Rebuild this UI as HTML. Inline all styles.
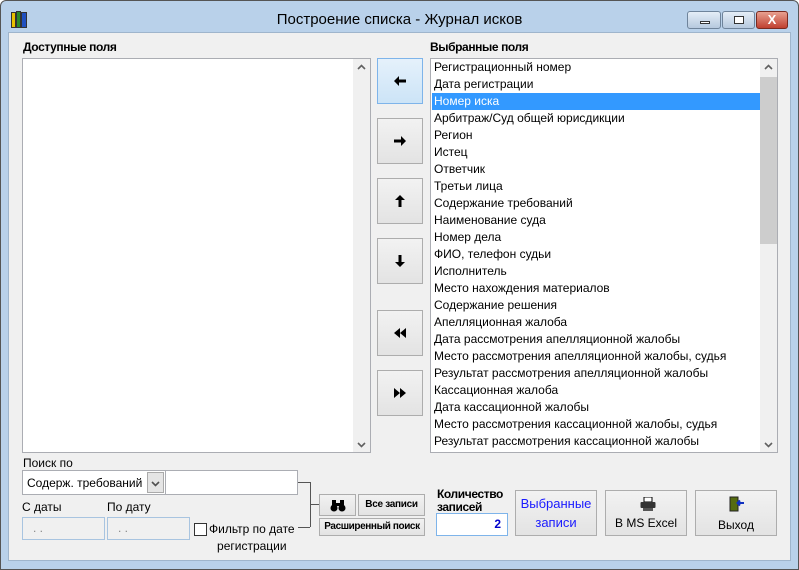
<!DOCTYPE html>
<html><head><meta charset="utf-8"><style>
*{margin:0;padding:0;box-sizing:border-box}
body{width:799px;height:570px;overflow:hidden;background:#fff;font-family:"Liberation Sans",sans-serif;font-size:12px;position:relative}
.abs{position:absolute}
#win{left:0;top:0;width:799px;height:570px;background:#b9d1ea;border:1px solid #555;border-radius:6px 6px 0 0}
#client{left:8px;top:32px;width:783px;height:529px;background:#f0f0f0;border:1px solid #9fb5cc}
.title{left:0;width:799px;top:11px;text-align:center;font-size:15px;color:#000}
.lbl{font-weight:bold;font-size:12px;font-family:"Liberation Sans",sans-serif;letter-spacing:-0.4px}
.list{background:#fff;border:1px solid #abadb3}
.btn{background:linear-gradient(#f2f2f2,#e3e3e3);border:1px solid #adadad;text-align:center}
.item{position:absolute;left:3px;height:17px;line-height:17px;font-size:12px;white-space:nowrap}
.sb{background:#f0f0f0}
.btn svg{position:absolute;left:16px;top:16px}
</style></head><body>
<div id="win" class="abs"></div>
<div class="abs" style="left:11px;top:12px;width:5px;height:16px;background:#e8c000;border:1px solid #333"></div>
<div class="abs" style="left:16px;top:11px;width:5px;height:17px;background:#2a8a2a;border:1px solid #333"></div>
<div class="abs" style="left:21px;top:12px;width:6px;height:16px;background:#2050c0;border:1px solid #333"></div>
<div class="abs title">Построение списка - Журнал исков</div>
<div class="abs" style="left:687px;top:11px;width:34px;height:18px;border:1px solid #6f849b;border-radius:3px;background:linear-gradient(#e4edf7,#b6c9de)"><div class="abs" style="left:12px;top:9px;width:10px;height:3px;background:#fff;border:1px solid #333"></div></div>
<div class="abs" style="left:722px;top:11px;width:33px;height:18px;border:1px solid #6f849b;border-radius:3px;background:linear-gradient(#e4edf7,#b6c9de)"><div class="abs" style="left:11px;top:4px;width:10px;height:8px;background:#fff;border:1px solid #333"></div></div>
<div class="abs" style="left:756px;top:11px;width:32px;height:18px;border:1px solid #7a2a20;border-radius:3px;background:linear-gradient(#e8a090,#c04030);color:#fff;font-weight:bold;text-align:center;line-height:16px;font-size:13px">X</div>
<div id="client" class="abs"></div>

<div class="abs lbl" style="left:23px;top:40px">Доступные поля</div>
<div class="abs lbl" style="left:430px;top:40px">Выбранные поля</div>

<div class="abs list" style="left:22px;top:58px;width:349px;height:395px">
<div class="abs sb" style="right:0;top:0;width:17px;height:393px">
<svg class="abs" style="left:4px;top:5px" width="9" height="6"><path d="M1 5L4.5 1.5L8 5" stroke="#606060" stroke-width="1.6" fill="none"/></svg>
<svg class="abs" style="left:4px;top:383px" width="9" height="6"><path d="M1 1L4.5 4.5L8 1" stroke="#606060" stroke-width="1.6" fill="none"/></svg></div>
</div>

<div class="abs list" style="left:430px;top:58px;width:348px;height:395px">
<div class="abs sb" style="right:0;top:0;width:17px;height:393px">
<svg class="abs" style="left:4px;top:5px" width="9" height="6"><path d="M1 5L4.5 1.5L8 5" stroke="#606060" stroke-width="1.6" fill="none"/></svg>
<div class="abs" style="left:0;top:18px;width:17px;height:167px;background:#cdcdcd"></div>
<svg class="abs" style="left:4px;top:383px" width="9" height="6"><path d="M1 1L4.5 4.5L8 1" stroke="#606060" stroke-width="1.6" fill="none"/></svg></div>
<div class="abs" style="left:1px;top:34px;width:328px;height:17px;background:#3399ff"></div>
<div class="item" style="top:0">Регистрационный номер</div>
<div class="item" style="top:17px">Дата регистрации</div>
<div class="item" style="top:34px;color:#fff">Номер иска</div>
<div class="item" style="top:51px">Арбитраж/Суд общей юрисдикции</div>
<div class="item" style="top:68px">Регион</div>
<div class="item" style="top:85px">Истец</div>
<div class="item" style="top:102px">Ответчик</div>
<div class="item" style="top:119px">Третьи лица</div>
<div class="item" style="top:136px">Содержание требований</div>
<div class="item" style="top:153px">Наименование суда</div>
<div class="item" style="top:170px">Номер дела</div>
<div class="item" style="top:187px">ФИО, телефон судьи</div>
<div class="item" style="top:204px">Исполнитель</div>
<div class="item" style="top:221px">Место нахождения материалов</div>
<div class="item" style="top:238px">Содержание решения</div>
<div class="item" style="top:255px">Апелляционная жалоба</div>
<div class="item" style="top:272px">Дата рассмотрения апелляционной жалобы</div>
<div class="item" style="top:289px">Место рассмотрения апелляционной жалобы, судья</div>
<div class="item" style="top:306px">Результат рассмотрения апелляционной жалобы</div>
<div class="item" style="top:323px">Кассационная жалоба</div>
<div class="item" style="top:340px">Дата кассационной жалобы</div>
<div class="item" style="top:357px">Место рассмотрения кассационной жалобы, судья</div>
<div class="item" style="top:374px">Результат рассмотрения кассационной жалобы</div>
</div>

<div class="abs btn" style="left:377px;top:58px;width:46px;height:46px;background:linear-gradient(#e5f1fb,#cce4f7);border-color:#7eb4ea"><svg width="12" height="12"><path d="M0 6L5 1V4.5H12V7.5H5V11Z" fill="#000"/></svg></div>
<div class="abs btn" style="left:377px;top:118px;width:46px;height:46px"><svg width="12" height="12"><path d="M12 6L7 1V4.5H0V7.5H7V11Z" fill="#000"/></svg></div>
<div class="abs btn" style="left:377px;top:178px;width:46px;height:46px"><svg width="12" height="12"><path d="M6 0L11 5H7.5V12H4.5V5H1Z" fill="#000"/></svg></div>
<div class="abs btn" style="left:377px;top:238px;width:46px;height:46px"><svg width="12" height="12"><path d="M6 12L11 7H7.5V0H4.5V7H1Z" fill="#000"/></svg></div>
<div class="abs btn" style="left:377px;top:310px;width:46px;height:46px"><svg width="12" height="12"><path d="M0 6L6 1V11ZM6 6L12 1V11Z" fill="#000"/></svg></div>
<div class="abs btn" style="left:377px;top:370px;width:46px;height:46px"><svg width="12" height="12"><path d="M6 6L0 1V11ZM12 6L6 1V11Z" fill="#000"/></svg></div>

<div class="abs" style="left:23px;top:456px">Поиск по</div>
<div class="abs" style="left:22px;top:470px;width:276px;height:25px;background:#fff;border:1px solid #abadb3"></div>
<div class="abs" style="left:27px;top:476px">Содерж. требований</div>
<div class="abs" style="left:147px;top:472px;width:17px;height:21px;background:#e5e5e5;border:1px solid #aaa"><svg class="abs" style="left:3px;top:8px" width="9" height="6"><path d="M1 1L4.5 4.5L8 1" stroke="#505050" stroke-width="1.6" fill="none"/></svg></div>
<div class="abs" style="left:165px;top:471px;width:1px;height:23px;background:#abadb3"></div>
<div class="abs" style="left:298px;top:482px;width:12px;height:1px;background:#555"></div>
<div class="abs" style="left:310px;top:482px;width:1px;height:45px;background:#555"></div>
<div class="abs" style="left:310px;top:504px;width:9px;height:1px;background:#555"></div>
<div class="abs" style="left:298px;top:527px;width:12px;height:1px;background:#555"></div>
<div class="abs" style="left:22px;top:500px">С даты</div>
<div class="abs" style="left:107px;top:500px">По дату</div>
<div class="abs" style="left:22px;top:517px;width:83px;height:23px;background:#f0f0f0;border:1px solid #a8c4e0;color:#888;padding:3px 10px">. .</div>
<div class="abs" style="left:107px;top:517px;width:83px;height:23px;background:#f0f0f0;border:1px solid #a8c4e0;color:#888;padding:3px 10px">. .</div>
<div class="abs" style="left:194px;top:523px;width:13px;height:13px;background:#fff;border:1px solid #333"></div>
<div class="abs" style="left:209px;top:521px;line-height:17px;text-align:center">Фильтр по дате<br>регистрации</div>

<div class="abs btn" style="left:319px;top:494px;width:37px;height:22px"><svg class="abs" style="left:10px;top:4px" width="16" height="13"><circle cx="4" cy="9" r="3.5" fill="#000"/><circle cx="12" cy="9" r="3.5" fill="#000"/><rect x="2" y="1" width="4" height="6" fill="#000"/><rect x="10" y="1" width="4" height="6" fill="#000"/><rect x="6" y="4" width="4" height="3" fill="#000"/></svg></div>
<div class="abs btn lbl" style="left:358px;top:494px;width:67px;height:22px;font-size:10px;line-height:20px;letter-spacing:-0.3px">Все записи</div>
<div class="abs btn lbl" style="left:319px;top:518px;width:106px;height:18px;font-size:10px;line-height:16px;letter-spacing:-0.4px;white-space:nowrap">Расширенный поиск</div>

<div class="abs lbl" style="left:437px;top:488px;line-height:13px">Количество<br>записей</div>
<div class="abs" style="left:436px;top:513px;width:72px;height:23px;background:#fff;border:1px solid #7eb4ea;color:#00c;text-align:right;padding:3px 6px;font-weight:bold">2</div>
<div class="abs btn" style="left:515px;top:490px;width:82px;height:46px;color:#1a1aff;font-size:13px;line-height:19px;padding-top:3px">Выбранные<br>записи</div>
<div class="abs btn" style="left:605px;top:490px;width:82px;height:46px;font-size:12px">
<svg class="abs" style="left:34px;top:6px" width="16" height="14"><rect x="4" y="0" width="8" height="5" fill="#fff" stroke="#000"/><rect x="0.5" y="5" width="15" height="6" rx="1" fill="#333"/><rect x="3" y="11" width="10" height="3" fill="#555"/></svg>
<div class="abs" style="left:0;width:80px;top:25px">В MS Excel</div></div>
<div class="abs btn" style="left:695px;top:490px;width:82px;height:46px;font-size:12px">
<svg class="abs" style="left:33px;top:5px" width="16" height="16"><rect x="1" y="1" width="8" height="14" fill="#556b10" stroke="#222"/><path d="M9 7L15 7M11 4.5L8.5 7L11 9.5" stroke="#1030c0" stroke-width="2" fill="none"/></svg>
<div class="abs" style="left:0;width:80px;top:27px">Выход</div></div>
</body></html>
